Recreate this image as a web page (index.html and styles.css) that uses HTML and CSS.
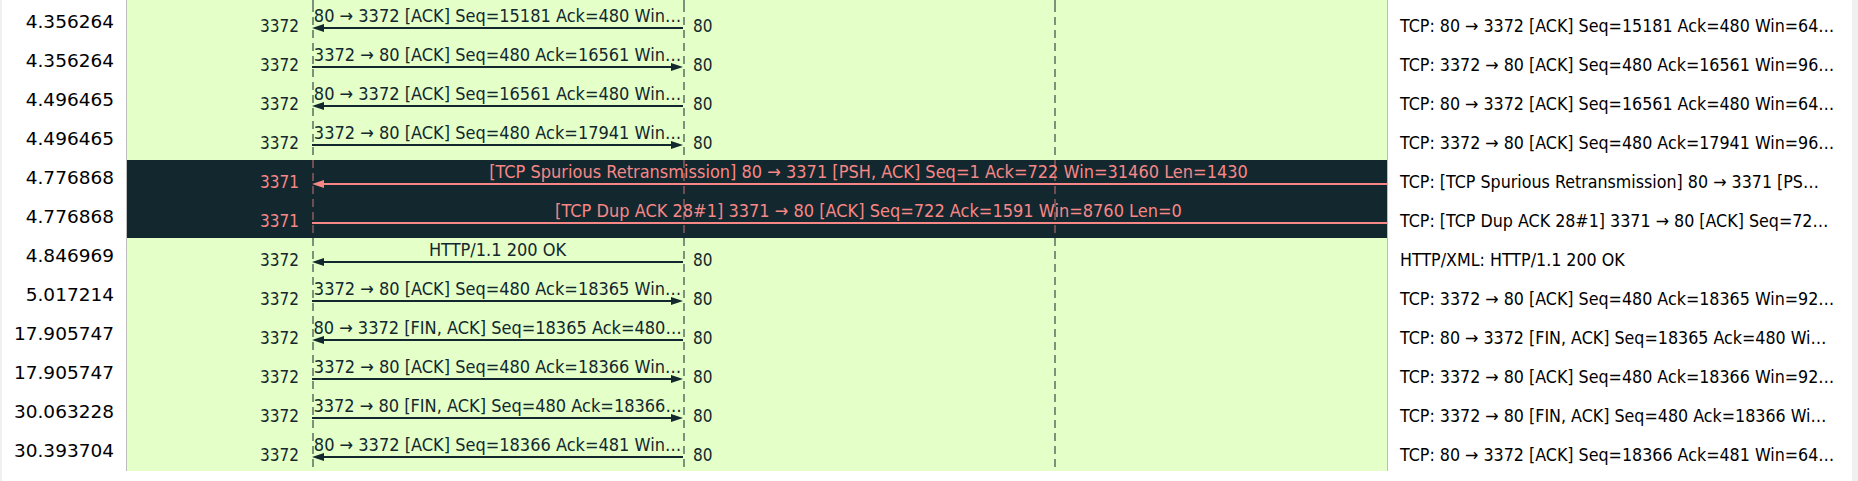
FILE: index.html
```html
<!DOCTYPE html>
<html lang="en">
<head>
<meta charset="utf-8">
<title>Flow Graph</title>
<link rel="stylesheet" href="styles.css">
</head>
<body>
<div class="window">
  <div class="graph">
    <div class="row http partial">
      <div class="time"></div>
      <div class="flow"></div>
      <div class="comment"></div>
    </div>

    <div class="row http">
      <div class="time">4.356264</div>
      <div class="flow">
        <span class="port left">3372</span>
        <div class="msg to-left"><div class="label"><span>80 → 3372 [ACK] Seq=15181 Ack=480 Win…</span></div><div class="arrow"><i class="head"></i><i class="shaft"></i></div></div>
        <span class="port right">80</span>
      </div>
      <div class="comment">TCP: 80 → 3372 [ACK] Seq=15181 Ack=480 Win=64…</div>
    </div>

    <div class="row http">
      <div class="time">4.356264</div>
      <div class="flow">
        <span class="port left">3372</span>
        <div class="msg to-right"><div class="label"><span>3372 → 80 [ACK] Seq=480 Ack=16561 Win…</span></div><div class="arrow"><i class="head"></i><i class="shaft"></i></div></div>
        <span class="port right">80</span>
      </div>
      <div class="comment">TCP: 3372 → 80 [ACK] Seq=480 Ack=16561 Win=96…</div>
    </div>

    <div class="row http">
      <div class="time">4.496465</div>
      <div class="flow">
        <span class="port left">3372</span>
        <div class="msg to-left"><div class="label"><span>80 → 3372 [ACK] Seq=16561 Ack=480 Win…</span></div><div class="arrow"><i class="head"></i><i class="shaft"></i></div></div>
        <span class="port right">80</span>
      </div>
      <div class="comment">TCP: 80 → 3372 [ACK] Seq=16561 Ack=480 Win=64…</div>
    </div>

    <div class="row http">
      <div class="time">4.496465</div>
      <div class="flow">
        <span class="port left">3372</span>
        <div class="msg to-right"><div class="label"><span>3372 → 80 [ACK] Seq=480 Ack=17941 Win…</span></div><div class="arrow"><i class="head"></i><i class="shaft"></i></div></div>
        <span class="port right">80</span>
      </div>
      <div class="comment">TCP: 3372 → 80 [ACK] Seq=480 Ack=17941 Win=96…</div>
    </div>

    <div class="row bad">
      <div class="time">4.776868</div>
      <div class="flow">
        <span class="port left">3371</span>
        <div class="msg wide to-left"><div class="label"><span>[TCP Spurious Retransmission] 80 → 3371 [PSH, ACK] Seq=1 Ack=722 Win=31460 Len=1430</span></div><div class="arrow"><i class="head"></i><i class="shaft"></i></div></div>
      </div>
      <div class="comment">TCP: [TCP Spurious Retransmission] 80 → 3371 [PS…</div>
    </div>

    <div class="row bad">
      <div class="time">4.776868</div>
      <div class="flow">
        <span class="port left">3371</span>
        <div class="msg wide to-right"><div class="label"><span>[TCP Dup ACK 28#1] 3371 → 80 [ACK] Seq=722 Ack=1591 Win=8760 Len=0</span></div><div class="arrow"><i class="head"></i><i class="shaft"></i></div></div>
      </div>
      <div class="comment">TCP: [TCP Dup ACK 28#1] 3371 → 80 [ACK] Seq=72…</div>
    </div>

    <div class="row http">
      <div class="time">4.846969</div>
      <div class="flow">
        <span class="port left">3372</span>
        <div class="msg to-left"><div class="label"><span>HTTP/1.1 200 OK</span></div><div class="arrow"><i class="head"></i><i class="shaft"></i></div></div>
        <span class="port right">80</span>
      </div>
      <div class="comment">HTTP/XML: HTTP/1.1 200 OK</div>
    </div>

    <div class="row http">
      <div class="time">5.017214</div>
      <div class="flow">
        <span class="port left">3372</span>
        <div class="msg to-right"><div class="label"><span>3372 → 80 [ACK] Seq=480 Ack=18365 Win…</span></div><div class="arrow"><i class="head"></i><i class="shaft"></i></div></div>
        <span class="port right">80</span>
      </div>
      <div class="comment">TCP: 3372 → 80 [ACK] Seq=480 Ack=18365 Win=92…</div>
    </div>

    <div class="row http">
      <div class="time">17.905747</div>
      <div class="flow">
        <span class="port left">3372</span>
        <div class="msg to-left"><div class="label"><span>80 → 3372 [FIN, ACK] Seq=18365 Ack=480…</span></div><div class="arrow"><i class="head"></i><i class="shaft"></i></div></div>
        <span class="port right">80</span>
      </div>
      <div class="comment">TCP: 80 → 3372 [FIN, ACK] Seq=18365 Ack=480 Wi…</div>
    </div>

    <div class="row http">
      <div class="time">17.905747</div>
      <div class="flow">
        <span class="port left">3372</span>
        <div class="msg to-right"><div class="label"><span>3372 → 80 [ACK] Seq=480 Ack=18366 Win…</span></div><div class="arrow"><i class="head"></i><i class="shaft"></i></div></div>
        <span class="port right">80</span>
      </div>
      <div class="comment">TCP: 3372 → 80 [ACK] Seq=480 Ack=18366 Win=92…</div>
    </div>

    <div class="row http">
      <div class="time">30.063228</div>
      <div class="flow">
        <span class="port left">3372</span>
        <div class="msg to-right"><div class="label"><span>3372 → 80 [FIN, ACK] Seq=480 Ack=18366…</span></div><div class="arrow"><i class="head"></i><i class="shaft"></i></div></div>
        <span class="port right">80</span>
      </div>
      <div class="comment">TCP: 3372 → 80 [FIN, ACK] Seq=480 Ack=18366 Wi…</div>
    </div>

    <div class="row http">
      <div class="time">30.393704</div>
      <div class="flow">
        <span class="port left">3372</span>
        <div class="msg to-left"><div class="label"><span>80 → 3372 [ACK] Seq=18366 Ack=481 Win…</span></div><div class="arrow"><i class="head"></i><i class="shaft"></i></div></div>
        <span class="port right">80</span>
      </div>
      <div class="comment">TCP: 80 → 3372 [ACK] Seq=18366 Ack=481 Win=64…</div>
    </div>
  </div>
</div>
</body>
</html>
```

FILE: styles.css
```css
html, body {
  margin: 0;
  padding: 0;
  background: #ffffff;
}

.window {
  box-sizing: border-box;
  width: 1858px;
  height: 481px;
  border-left: 2px solid #f0f0f0;
  border-right: 6px solid #f0f0f0;
  background: #ffffff;
}

.graph {
  width: 1850px;
  height: 471px;
  overflow: hidden;
}

.row {
  display: grid;
  grid-template-columns: 124px 1261px 465px;
  height: 39px;
}

.row.partial {
  height: 4px;
}

.time {
  box-sizing: border-box;
  padding: 7px 12px 0 0;
  text-align: right;
  font-family: "DejaVu Sans", Verdana, sans-serif;
  font-size: 18.5px;
  line-height: 22px;
  color: #000000;
  white-space: nowrap;
  overflow: hidden;
}

.flow {
  --lifeline-dash: repeating-linear-gradient(to bottom, var(--ll) 0 8px, transparent 8px 13px);
  display: grid;
  grid-template-columns: 185px 371px 371px 371px;
  grid-template-rows: 39px;
  overflow: hidden;
  border-left: 1px solid #bdbdbd;
  background-color: var(--bg);
  background-image: var(--lifeline-dash), var(--lifeline-dash), var(--lifeline-dash);
  background-position: 185px 0, 556px 0, 927px 0;
  background-size: 2px 100%;
  background-repeat: no-repeat;
  color: var(--fg);
  font-family: "DejaVu Sans Condensed", "DejaVu Sans", sans-serif;
  font-stretch: semi-condensed;
}

.row.http .flow {
  --bg: #e4ffc7;
  --fg: #12272e;
  --ll: rgba(18, 39, 46, 0.5);
}

.row.bad .flow {
  --bg: #12272e;
  --fg: #f78787;
  --ll: rgba(247, 135, 135, 0.4);
}

.port {
  grid-row: 1;
  font-size: 17px;
  line-height: 20px;
  padding-top: 12px;
  white-space: nowrap;
}

.port.left {
  grid-column: 1;
  text-align: right;
  padding-right: 13px;
}

.port.right {
  grid-column: 3;
  padding-left: 10px;
}

.msg {
  grid-row: 1;
  grid-column: 2 / 3;
  min-width: 0;
  display: flex;
  flex-direction: column;
}

.msg.wide {
  grid-column: 2 / 5;
}

.label {
  display: flex;
  justify-content: center;
  height: 17px;
  padding-top: 3px;
  font-size: 18px;
  line-height: 17px;
  white-space: nowrap;
}

.arrow {
  display: flex;
  align-items: center;
  height: 8px;
}

.shaft {
  flex: 1;
  height: 2px;
  background: currentColor;
}

.head {
  width: 0;
  height: 0;
  border-top: 4px solid transparent;
  border-bottom: 4px solid transparent;
}

.to-left .head {
  order: 0;
  border-right: 12px solid currentColor;
}

.to-right .head {
  order: 2;
  border-left: 12px solid currentColor;
}

.comment {
  box-sizing: border-box;
  border-left: 1px solid #bdbdbd;
  padding: 12px 0 0 12px;
  font-family: "DejaVu Sans Condensed", "DejaVu Sans", sans-serif;
  font-stretch: semi-condensed;
  font-size: 17.7px;
  line-height: 20px;
  color: #000000;
  white-space: nowrap;
  overflow: hidden;
}
```
